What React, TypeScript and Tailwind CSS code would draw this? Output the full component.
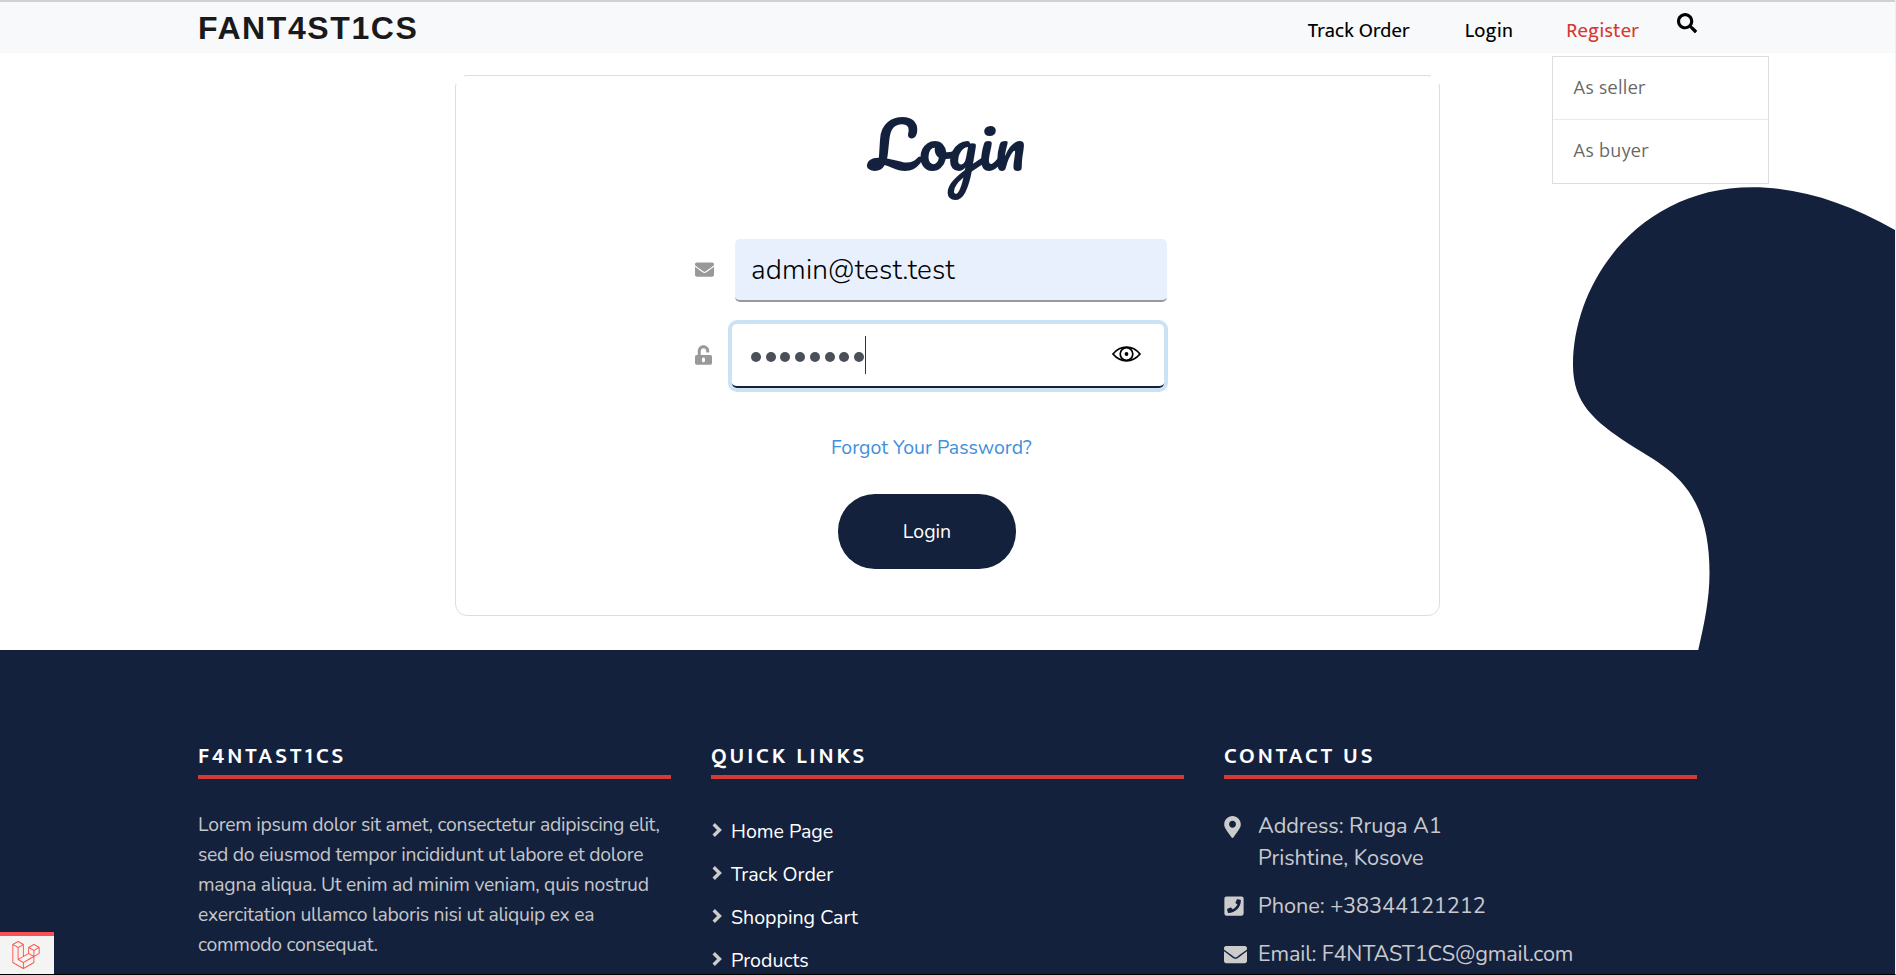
import type { ReactNode } from 'react';
import { FaSearch, FaEnvelope, FaUnlockAlt, FaMapMarkerAlt, FaPhoneSquare } from 'react-icons/fa';
import { SiLaravel } from 'react-icons/si';

function Header() {
  return (
    <header className="relative z-20 h-[53px] shrink-0 border-t-2 border-[#d0d1d3] bg-[#f8f9fb]">
      <div className="ml-[198px] flex w-[1499px] items-start">
        <a className="whitespace-nowrap font-['Liberation_Sans',Arimo,sans-serif] text-[32px] font-bold leading-[52px] tracking-[1.6px] text-[#1a1a1a]">
          FANT4ST1CS
        </a>
        <nav className="ml-auto flex items-start whitespace-nowrap pt-[10px] font-['Mukta',sans-serif] text-[20.6px] leading-[38px] tracking-[0.15px] text-black">
          <a>Track Order</a>
          <a className="ml-[55px]">Login</a>
          <div className="relative ml-[53px]">
            <a className="text-[#d63a34]">Register</a>
            <Dropdown />
          </div>
        </nav>
        <FaSearch className="ml-[38px] mt-[11px] size-5 text-black" />
      </div>
    </header>
  );
}

function Dropdown() {
  return (
    <ul className="absolute -left-[14px] top-[44px] w-[217px] border border-[#dddddd] bg-white font-light tracking-[0.350px] text-[#666666]">
      <li className="h-[63px] border-b border-[#eaeaea] pl-[20px] leading-[62px]">As seller</li>
      <li className="h-[63px] pl-[20px] leading-[62px]">As buyer</li>
    </ul>
  );
}

function Blob() {
  return (
    <svg className="absolute right-0 top-0" width="355" height="597" viewBox="1540 53 355 597">
      <path
        fill="#14213d"
        d="M1896 230.500C1848 203 1800 187.300 1753 187.300C1640 187 1573 281 1573 365C1573 403 1594 421 1629 444C1665 467 1709.500 484 1709.500 573C1709.500 600 1704 625 1698 651L1896 651Z"
      />
    </svg>
  );
}

function Eye() {
  return (
    <svg width="29" height="16" viewBox="0 0 29 16" fill="none" stroke="#000" strokeWidth="1.7">
      <path d="M1 8C5 3.200 9.500 1.200 14.500 1.200S24 3.200 28 8C24 12.800 19.500 14.800 14.500 14.800S5 12.800 1 8Z" />
      <circle cx="14.500" cy="8" r="6.300" />
      <circle cx="14.500" cy="8" r="1.900" fill="#000" stroke="none" />
    </svg>
  );
}

function Chevron() {
  return (
    <svg className="ml-px mt-[12px]" width="11" height="16" viewBox="0 0 11 16" fill="none" stroke="#cccccc" strokeWidth="3.4">
      <path d="M1.700 2.200L7.500 8L1.700 13.800" />
    </svg>
  );
}

function LoginCard() {
  return (
    <section className="relative ml-[455px] mt-[22px] h-[541px] w-[985px] rounded-[12px] border border-[#dddddd] bg-white">
      <span className="absolute -left-px -top-px size-[9px] bg-white" />
      <span className="absolute -right-px -top-px size-[9px] bg-white" />
      <h1 className="pt-[17px] text-center font-['Pacifico',cursive] text-[65px] leading-[100px] text-[#14213d]">Login</h1>

      <div className="mt-[46px] flex items-center pl-[239px]">
        <FaEnvelope className="mb-[2px] size-[19px] text-[#999999]" />
        <div className="ml-[21px] h-[63px] w-[432px] rounded-[5px] border-b-2 border-[#999999] bg-[#e8f0fe] pl-[16px] pt-px text-[28px] font-[350] leading-[61px] tracking-[0.150px] text-black">
          admin@test.test
        </div>
      </div>

      <div className="mt-[22px] flex items-center pl-[239px]">
        <FaUnlockAlt className="mb-[2px] h-[20px] w-[17px] text-[#999999]" />
        <div className="ml-[20px] flex h-[64px] w-[432px] items-center rounded-[5px] border-b-2 border-[#14213d] bg-white pl-[19px] ring-4 ring-[#cbe2f5]">
          <span className="flex gap-[4.730px] pt-[3px]">
            {Array.from({ length: 8 }, (_, i) => (
              <i key={i} className="size-[10px] rounded-full bg-[#495057]" />
            ))}
          </span>
          <span className="ml-[1px] h-[38px] w-px bg-[#333333]" />
          <span className="mb-[2px] ml-auto mr-[23px]">
            <Eye />
          </span>
        </div>
      </div>

      <a className="ml-[375px] mt-[46px] block text-[19.500px] leading-[28px] text-[#3f8fdc]">Forgot Your Password?</a>
      <button className="ml-[382px] mt-[32px] block h-[75px] w-[178px] rounded-[37px] bg-[#14213d] text-[19.500px] text-white">
        Login
      </button>
    </section>
  );
}

function FooterColumn({ title, children }: { title: string; children: ReactNode }) {
  return (
    <div className="w-[473px]">
      <h3 className="mb-[31px] border-b-4 border-[#d63a34] pb-[3px] font-['Mukta',sans-serif] text-[22.500px] font-semibold leading-[30px] tracking-[2.900px] text-white">
        {title}
      </h3>
      {children}
    </div>
  );
}

const lorem = [
  'Lorem ipsum dolor sit amet, consectetur adipiscing elit,',
  'sed do eiusmod tempor incididunt ut labore et dolore',
  'magna aliqua. Ut enim ad minim veniam, quis nostrud',
  'exercitation ullamco laboris nisi ut aliquip ex ea',
  'commodo consequat.',
];

function ContactItem({ icon, children }: { icon: ReactNode; children: ReactNode }) {
  return (
    <li className="flex">
      <span className="w-[34px] shrink-0">{icon}</span>
      <span>{children}</span>
    </li>
  );
}

function Footer() {
  return (
    <footer className="flex min-h-0 flex-1 gap-[40px] overflow-hidden whitespace-nowrap bg-[#14213d] pl-[198px] pt-[92px]">
      <FooterColumn title="F4NTAST1CS">
        <p className="text-[19.400px] leading-[30px] tracking-[-0.280px] text-[#c4c6c9]">
          {lorem.map((line) => (
            <span key={line} className="block">
              {line}
            </span>
          ))}
        </p>
      </FooterColumn>
      <FooterColumn title="QUICK LINKS">
        <ul className="text-[19.600px] leading-[43px] text-white">
          {['Home Page', 'Track Order', 'Shopping Cart', 'Products'].map((link) => (
            <li key={link} className="flex">
              <Chevron />
              <span className="ml-[8px]">{link}</span>
            </li>
          ))}
        </ul>
      </FooterColumn>
      <FooterColumn title="CONTACT US">
        <ul className="flex flex-col gap-[16px] text-[21.700px] leading-[32px] tracking-[-0.050px] text-[#c8c9cc]">
          <ContactItem icon={<FaMapMarkerAlt className="mt-[6px] h-[22px] w-[17px] text-[#cccccc]" />}>
            Address: Rruga A1
            <br />
            Prishtine, Kosove
          </ContactItem>
          <ContactItem icon={<FaPhoneSquare className="mt-[5px] h-[22px] w-[20px] text-[#cccccc]" />}>Phone: +38344121212</ContactItem>
          <ContactItem icon={<FaEnvelope className="mt-[5px] size-[23px] text-[#cccccc]" />}>
            <span className="tracking-[-0.150px]">Email: F4NTAST1CS@gmail.com</span>
          </ContactItem>
        </ul>
      </FooterColumn>
    </footer>
  );
}

export default function App() {
  return (
    <div className="relative flex h-[975px] w-[1896px] flex-col overflow-hidden border-b border-r border-b-black border-r-[#eeeeee] bg-white font-['Nunito',sans-serif]">
      <Header />
      <main className="relative h-[597px] shrink-0 overflow-hidden">
        <Blob />
        <div className="flex">
          <LoginCard />
        </div>
      </main>
      <Footer />
      <div className="absolute bottom-0 left-0 flex h-[42px] w-[54px] justify-center border-t-4 border-[#fb5156] bg-[#f4f4f4] pr-[2px] pt-[5px]">
        <SiLaravel className="size-[28px] text-[#ff4b3e]" />
      </div>
    </div>
  );
}
